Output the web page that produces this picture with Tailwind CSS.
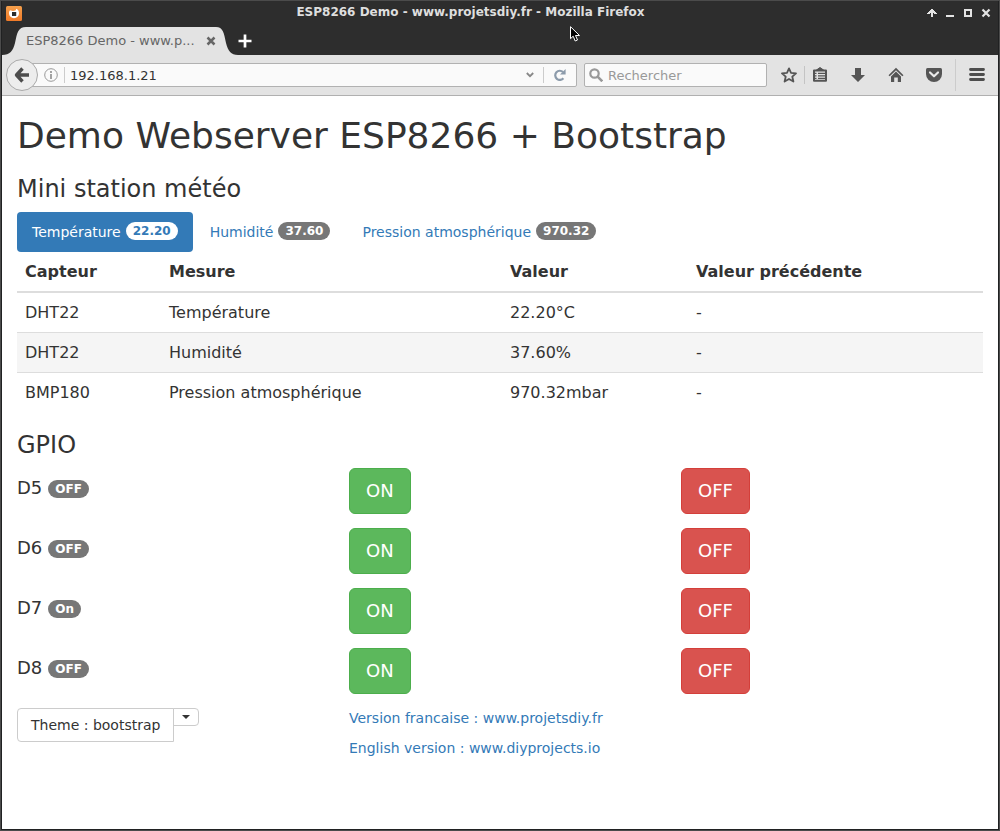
<!DOCTYPE html>
<html lang="fr">
<head>
<meta charset="utf-8">
<meta name="viewport" content="width=device-width, initial-scale=1">
<title>ESP8266 Demo - www.projetsdiy.fr</title>
<script src="https://cdn.jsdelivr.net/npm/@tailwindcss/browser@4"></script>
</head>
<body class="min-h-screen border border-[#4b4b4b] bg-white font-['DejaVu_Sans',sans-serif] text-sm text-[#333]">
<div class="relative flex min-h-[calc(100vh-2px)] flex-col border border-t-0 border-[#202122]">

<!-- Window title bar and tab strip -->
<header class="bg-[#2d2d2d]">
  <div class="flex h-[26px] items-center pr-[7px] pl-1">
    <svg class="h-4 w-4 shrink-0" viewBox="0 0 16 16" aria-hidden="true">
      <defs><linearGradient id="g" x2="0" y2="1"><stop stop-color="#f5a04c"/><stop offset="1" stop-color="#f07a28"/></linearGradient></defs>
      <rect width="16" height="15" rx="1.500" fill="url(#g)"/>
      <path d="M4 4.200C3.200 5 3 6 3 7.200a5 5 0 0 0 10 0c0-2-.8-3.600-2.600-4.400L9.500 4.500 7 5z" fill="#fff"/>
      <path d="M6 6h4.200v4H6z" fill="#2d2d2d"/>
    </svg>
    <h1 class="flex-1 pr-2 pb-1 text-center text-xs leading-5 font-bold text-[#dedede]">ESP8266 Demo - www.projetsdiy.fr - Mozilla Firefox</h1>
    <div class="flex items-center gap-2 pb-0.5 text-[#e4e4e4]">
      <button aria-label="Enrouler" class="h-2.5 w-2.5"><svg viewBox="0 0 10 10" shape-rendering="crispEdges" fill="currentColor"><path d="M4 1h2v1h1v1h1v1h1v1h1v1H7V5H6v4H4V5H3v1H0V5h1V4h1V3h1V2h1z"/></svg></button>
      <button aria-label="Réduire" class="h-2.5 w-2.5"><svg viewBox="0 0 10 10" fill="currentColor"><path d="M1 7h8v2H1z"/></svg></button>
      <button aria-label="Agrandir" class="h-2.5 w-2.5"><svg viewBox="0 0 10 10" fill="none" stroke="currentColor" stroke-width="2"><path d="M2 2h6v6H2z"/></svg></button>
      <button aria-label="Fermer" class="h-2.5 w-2.5"><svg viewBox="0 0 10 10" fill="none" stroke="currentColor" stroke-width="2.200"><path d="m1.500 1.500 7 7m0-7-7 7"/></svg></button>
    </div>
  </div>
  <div class="flex h-7 items-stretch">
    <svg class="h-7 w-6 shrink-0" viewBox="0 0 24 28" fill="#e3e3e3" aria-hidden="true"><path d="M0 28c8 0 11-4 13-12C15 6 16 0 24 0v28z"/></svg>
    <div class="flex w-[190px] items-center justify-between bg-[#e3e3e3] text-[#666]">
      <span class="text-[13px] leading-5">ESP8266 Demo - www.p...</span>
      <button aria-label="Fermer l’onglet" class="h-2.5 w-2.5"><svg viewBox="0 0 10 10" fill="none" stroke="currentColor" stroke-width="2.500"><path d="m1.500 1.500 7 7m0-7-7 7"/></svg></button>
    </div>
    <svg class="h-7 w-[22px] shrink-0" viewBox="0 0 22 28" fill="#e3e3e3" aria-hidden="true"><path d="M22 28c-7 0-10-4-12-12C8 6 7 0 0 0v28z"/></svg>
    <button aria-label="Nouvel onglet" class="h-7 w-3.5 text-white"><svg viewBox="0 0 14 14" stroke="currentColor" stroke-width="2.700"><path d="M7 .5v13M.5 7h13"/></svg></button>
  </div>
</header>

<!-- Navigation toolbar -->
<nav class="flex h-[41px] items-center border-b border-[#b0b0b0] bg-[#e3e3e3] pr-[13px] pl-1 text-[#555]">
  <button aria-label="Précédent" class="z-10 flex h-8 w-8 shrink-0 items-center justify-center rounded-full border border-[#aaa] bg-[#ededed]">
    <svg class="h-4 w-4" viewBox="0 0 16 16" fill="none" stroke="#4d4d4d" stroke-width="3.400" stroke-linejoin="round"><path d="M8.500 1.500 2.500 8l6 6.500M3 8h12"/></svg>
  </button>
  <div class="-ml-2 flex h-6 flex-1 items-center rounded-r-xs border border-[#b1b1b1] bg-[#fafafa] pr-2.5 pl-[13px]">
    <svg class="h-3.5 w-3.5 shrink-0" viewBox="0 0 14 14" fill="none" stroke="#999"><circle cx="7" cy="7" r="6.300"/><path d="M7 6v5M7 3v2" stroke-width="1.800"/></svg>
    <span class="mr-[5px] ml-1.5 h-4 w-px bg-[#ccc]"></span>
    <input aria-label="Adresse" value="192.168.1.21" class="h-5 min-w-0 flex-1 bg-transparent text-[13px] text-[#333] outline-none">
    <button aria-label="Historique" class="h-2 w-2"><svg viewBox="0 0 8 8" fill="none" stroke="#888" stroke-width="1.800"><path d="m.8 2 3.200 3.200L7.200 2"/></svg></button>
    <span class="mr-2.5 ml-[9px] h-4 w-px bg-[#ccc]"></span>
    <button aria-label="Actualiser" class="h-3 w-3"><svg viewBox="0 0 12 12" fill="none" stroke="#8c9bab" stroke-width="2.200"><path d="M9.400 9.300A4.600 4.600 0 1 1 9 3"/><path d="M11.600 0v5.600H6z" fill="#8c9bab" stroke="none"/></svg></button>
  </div>
  <label class="ml-[7px] flex h-6 w-[183px] items-center gap-[5px] rounded-xs border border-[#b1b1b1] bg-[#fafafa] pl-1">
    <svg class="h-3.5 w-3.5 shrink-0" viewBox="0 0 14 14" fill="none" stroke="#999" stroke-width="2.200"><circle cx="5.500" cy="5.500" r="4.200"/><path d="m8.600 8.600 4.700 4.700" stroke-width="2.600"/></svg>
    <input aria-label="Rechercher" placeholder="Rechercher" class="h-5 min-w-0 flex-1 bg-transparent text-[13px] outline-none placeholder:text-[#999]">
  </label>
  <button aria-label="Marque-page" class="ml-3.5 h-4 w-4"><svg viewBox="0 0 16 16" fill="none" stroke="currentColor" stroke-width="1.800" stroke-linejoin="round"><path d="m8 1.400 2 4.500 5 .5-3.700 3.300 1.100 4.800L8 12l-4.400 2.500 1.100-4.800L1 6.400l5-.5z"/></svg></button>
  <span class="mx-[7px] h-[18px] w-px bg-[#c4c4c4]"></span>
  <button aria-label="Liste des marque-pages" class="h-4 w-4"><svg viewBox="0 0 16 16" fill="none" stroke="currentColor"><path d="M2 3.500h12v10.300H2z" stroke-width="2" stroke-linejoin="round"/><path d="M4.500 3 8 .500 11.500 3z" fill="currentColor" stroke-width="1"/><path d="M3 6.300h1.500m1.500 0h7M3 8.800h1.500m1.500 0h7M3 11.300h1.500m1.500 0h7" stroke-width="1.300"/></svg></button>
  <button aria-label="Téléchargements" class="ml-[22px] h-4 w-4"><svg viewBox="0 0 16 16" fill="currentColor"><path d="M5 1h6v7h4l-7 7-7-7h4z"/></svg></button>
  <button aria-label="Accueil" class="ml-[22px] h-4 w-4"><svg viewBox="0 0 16 16" fill="currentColor"><path d="m8 .8 7.500 7.400-1.200 1.100L8 3.200 1.700 9.300.5 8.200z"/><path d="m8 4.600 5 4.800V15H9.800v-4.500H6.200V15H3V9.400z"/></svg></button>
  <button aria-label="Pocket" class="ml-[22px] h-4 w-4"><svg viewBox="0 0 16 16"><path d="M1.500 1h13q1.500 0 1.500 1.500V7A8 8 0 0 1 0 7V2.500Q0 1 1.500 1z" fill="currentColor"/><path d="M4 5.500 8 9.300l4-3.800" fill="none" stroke="#e9e9e9" stroke-width="2.200" stroke-linecap="round" stroke-linejoin="round"/></svg></button>
  <span class="mr-[13px] ml-[13px] h-8 w-px bg-[#ccc]"></span>
  <button aria-label="Menu" class="h-4 w-4"><svg viewBox="0 0 16 16" stroke="#4d4d4d" stroke-width="2.800" stroke-linecap="round"><path d="M1.500 2.500h13M1.500 7.500h13M1.500 12.500h13"/></svg></button>
</nav>

<main class="flex-1 px-[15px] pt-5">
  <h1 class="text-4xl leading-10">Demo Webserver ESP8266 + Bootstrap</h1>
  <h2 class="mt-5 mb-2.5 text-2xl leading-[26px]">Mini station météo</h2>

  <ul class="flex gap-0.5 leading-5">
    <li><a href="#temperature" class="flex rounded-sm bg-[#337ab7] px-[15px] py-2.5 text-white">Température<span class="ml-[5px] h-[18px] rounded-full bg-white px-[7px] text-xs leading-[18px] font-bold text-[#337ab7]">22.20</span></a></li>
    <li><a href="#humidite" class="flex rounded-sm px-[15px] py-2.5 text-[#337ab7]">Humidité<span class="ml-[5px] h-[18px] rounded-full bg-[#777] px-[7px] text-xs leading-[18px] font-bold text-white">37.60</span></a></li>
    <li><a href="#pression" class="flex rounded-sm px-[15px] py-2.5 text-[#337ab7]">Pression atmosphérique<span class="ml-[5px] h-[18px] rounded-full bg-[#777] px-[7px] text-xs leading-[18px] font-bold text-white">970.32</span></a></li>
  </ul>

  <table class="mb-5 w-full text-left text-base leading-[23px]">
    <thead>
      <tr class="border-b-2 border-[#ddd]"><th class="w-36 p-2">Capteur</th><th class="w-[341px] p-2">Mesure</th><th class="w-[186px] p-2">Valeur</th><th class="p-2">Valeur précédente</th></tr>
    </thead>
    <tbody>
      <tr><td class="p-2">DHT22</td><td class="p-2">Température</td><td class="p-2">22.20°C</td><td class="p-2">-</td></tr>
      <tr class="border-y border-[#ddd] bg-[#f5f5f5]"><td class="p-2">DHT22</td><td class="p-2">Humidité</td><td class="p-2">37.60%</td><td class="p-2">-</td></tr>
      <tr><td class="p-2">BMP180</td><td class="p-2">Pression atmosphérique</td><td class="p-2">970.32mbar</td><td class="p-2">-</td></tr>
    </tbody>
  </table>

  <h2 class="mb-2.5 text-2xl leading-[26px]">GPIO</h2>

  <div class="-mx-[15px] grid grid-cols-3 *:px-[15px]">
    <div class="h-[60px]"><h3 class="flex items-end gap-1.5 pt-2.5 text-lg leading-5">D5<span class="h-[18px] rounded-full bg-[#777] px-[7px] text-xs leading-[18px] font-bold text-white">OFF</span></h3></div>
    <div><button class="h-[46px] rounded-md border border-[#4cae4c] bg-[#5cb85c] px-4 text-lg text-white">ON</button></div>
    <div><button class="h-[46px] rounded-md border border-[#d43f3a] bg-[#d9534f] px-4 text-lg text-white">OFF</button></div>

    <div class="h-[60px]"><h3 class="flex items-end gap-1.5 pt-2.5 text-lg leading-5">D6<span class="h-[18px] rounded-full bg-[#777] px-[7px] text-xs leading-[18px] font-bold text-white">OFF</span></h3></div>
    <div><button class="h-[46px] rounded-md border border-[#4cae4c] bg-[#5cb85c] px-4 text-lg text-white">ON</button></div>
    <div><button class="h-[46px] rounded-md border border-[#d43f3a] bg-[#d9534f] px-4 text-lg text-white">OFF</button></div>

    <div class="h-[60px]"><h3 class="flex items-end gap-1.5 pt-2.5 text-lg leading-5">D7<span class="h-[18px] rounded-full bg-[#777] px-[7px] text-xs leading-[18px] font-bold text-white">On</span></h3></div>
    <div><button class="h-[46px] rounded-md border border-[#4cae4c] bg-[#5cb85c] px-4 text-lg text-white">ON</button></div>
    <div><button class="h-[46px] rounded-md border border-[#d43f3a] bg-[#d9534f] px-4 text-lg text-white">OFF</button></div>

    <div class="h-[60px]"><h3 class="flex items-end gap-1.5 pt-2.5 text-lg leading-5">D8<span class="h-[18px] rounded-full bg-[#777] px-[7px] text-xs leading-[18px] font-bold text-white">OFF</span></h3></div>
    <div><button class="h-[46px] rounded-md border border-[#4cae4c] bg-[#5cb85c] px-4 text-lg text-white">ON</button></div>
    <div><button class="h-[46px] rounded-md border border-[#d43f3a] bg-[#d9534f] px-4 text-lg text-white">OFF</button></div>

    <div class="flex items-start">
      <button class="rounded-l-sm border border-[#ccc] px-[13px] py-1.5 leading-5">Theme : bootstrap</button>
      <button aria-label="Choisir un thème" class="-ml-px flex h-[18px] w-[26px] items-center justify-center rounded-r-sm border border-[#ccc]"><svg class="h-1 w-2" viewBox="0 0 8 4" fill="#333"><path d="M0 0h8L4 4z"/></svg></button>
    </div>
    <div class="flex flex-col items-start gap-2.5 leading-5 text-[#337ab7]">
      <a href="http://www.projetsdiy.fr">Version francaise : www.projetsdiy.fr</a>
      <a href="http://www.diyprojects.io">English version : www.diyprojects.io</a>
    </div>
  </div>
</main>

<!-- Mouse pointer -->
<svg class="pointer-events-none absolute top-[25px] left-[568px] h-4 w-[11px]" viewBox="0 0 11 16" fill="#000" stroke="#fff" aria-hidden="true"><path d="M.5.700v12l2.700-2.500 2 4.800 2.300-1-2-4.500h4z"/></svg>
</div>
</body>
</html>
